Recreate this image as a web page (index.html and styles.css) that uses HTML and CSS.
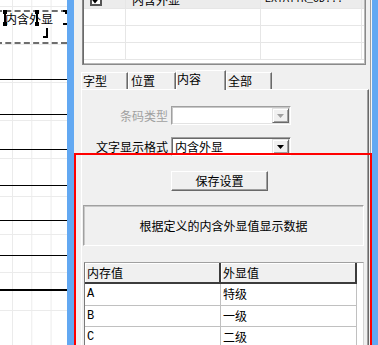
FILE: index.html
```html
<!DOCTYPE html>
<html lang="zh-CN">
<head>
    <meta charset="UTF-8">
    <meta name="viewport" content="width=device-width, initial-scale=1.0">
    <link rel="stylesheet" href="styles.css">
    <title>内含外显</title>
</head>
<body>
    <div class="screen">
        <!-- Report design canvas -->
        <div class="canvas">
            <div class="field">
                <span class="field-text">内含外显</span>
                <svg class="marks" width="71" height="34" viewBox="0 0 71 34">
                    <rect x="7" y="0" width="4" height="4"/>
                    <rect x="8" y="0" width="2" height="16"/>
                    <rect x="7" y="12" width="4" height="4"/>
                    <rect x="39" y="0" width="4" height="4"/>
                    <rect x="40" y="0" width="2" height="16"/>
                    <rect x="39" y="12" width="4" height="4"/>
                    <rect x="67" y="0" width="4" height="2"/>
                    <rect x="69" y="0" width="2" height="4"/>
                    <rect x="67" y="13" width="4" height="2"/>
                    <rect x="50" y="18" width="2" height="10"/>
                    <rect x="47" y="26" width="5" height="2"/>
                </svg>
            </div>
            <div class="band first"></div>
            <div class="band"></div>
            <div class="band"></div>
            <div class="band"></div>
            <div class="band"></div>
            <div class="band"></div>
            <div class="band last"></div>
        </div>

        <div class="edge edge-left"></div>

        <!-- Property dialog -->
        <div class="dialog">
            <div class="list">
                <div class="list-row on">
                    <div class="cell c1">
                        <svg class="check" width="12" height="12" viewBox="0 0 12 12">
                            <rect x="1" y="1" width="10" height="10" fill="#fff" stroke="#555" stroke-width="2"/>
                            <path d="M3 5.5 L5 8 L9 3" fill="none" stroke="#000" stroke-width="2"/>
                        </svg>
                    </div>
                    <div class="cell c2">内含外显</div>
                    <div class="cell c3 mono">EXTATTR_OD...</div>
                </div>
                <div class="list-row"><div class="cell c1"></div><div class="cell c2"></div><div class="cell c3"></div></div>
                <div class="list-row"><div class="cell c1"></div><div class="cell c2"></div><div class="cell c3"></div></div>
                <div class="list-row"><div class="cell c1"></div><div class="cell c2"></div><div class="cell c3"></div></div>
            </div>

            <div class="tabs">
                <div class="tab t1">字型</div>
                <div class="tab t2">位置</div>
                <div class="tab t3 active">内容</div>
                <div class="tab t4">全部</div>
            </div>

            <div class="pane">
                <div class="form-row first">
                    <label class="label disabled">条码类型</label>
                    <div class="combo disabled">
                        <span class="combo-value"></span>
                        <span class="combo-btn">
                            <svg width="7" height="4" viewBox="0 0 7 4"><polygon points="0,0 7,0 3.5,4" fill="#a0a0a0"/></svg>
                        </span>
                    </div>
                </div>
                <div class="form-row">
                    <label class="label">文字显示格式</label>
                    <div class="combo">
                        <span class="combo-value">内含外显</span>
                        <span class="combo-btn">
                            <svg width="7" height="4" viewBox="0 0 7 4"><polygon points="0,0 7,0 3.5,4" fill="#000"/></svg>
                        </span>
                    </div>
                </div>

                <button class="save">保存设置</button>

                <div class="note">根据定义的内含外显值显示数据</div>

                <div class="grid">
                    <div class="grid-row head">
                        <div class="gc g1">内存值</div>
                        <div class="gc g2">外显值</div>
                    </div>
                    <div class="grid-row">
                        <div class="gc g1 mono">A</div>
                        <div class="gc g2">特级</div>
                    </div>
                    <div class="grid-row">
                        <div class="gc g1 mono">B</div>
                        <div class="gc g2">一级</div>
                    </div>
                    <div class="grid-row">
                        <div class="gc g1 mono">C</div>
                        <div class="gc g2">二级</div>
                    </div>
                </div>
            </div>
        </div>

        <div class="edge edge-right"></div>

        <!-- Red highlight frame drawn over the dialog -->
        <div class="highlight"></div>
    </div>
</body>
</html>
```

FILE: styles.css
```css
/* Whole screen */
body, html {
    margin: 0;
    background-color: #fff;
    font-family: "Noto Sans CJK SC", "Liberation Sans", sans-serif;
    font-size: 12px;
    color: #000;
}

.screen {
    position: relative;
    display: flex;
    width: 378px;
    height: 345px;
    overflow: hidden;
}

/* Design canvas on the left */
.canvas {
    flex: none;
    width: 67px;
    background-color: #fff;
    background-image:
        linear-gradient(to right, #ebebeb 1px, transparent 1px),
        linear-gradient(to bottom, #ebebeb 1px, transparent 1px);
    background-size: 19.3px 100%, 100% 38px;
    background-position: 12px 0, 0 6px;
}

.field {
    position: relative;
    box-sizing: border-box;
    width: 71px;
    height: 34px;
    margin: 10px 0 0 -4px;
    border-top: 2px dashed #6e6e6e;
    border-bottom: 2px dashed #6e6e6e;
}

.field-text {
    display: block;
    padding-left: 9px;
    line-height: 14px;
}

.marks {
    position: absolute;
    top: -2px;
    left: 0;
    fill: #000;
}

.band {
    box-sizing: border-box;
    height: 35.2px;
    border-bottom: 1px solid #000;
}

.band.first {
    height: 36px;
}

.band.last {
    border-bottom-width: 2px;
}

/* Blue window edges */
.edge {
    flex: none;
    background-color: #62a8f2;
}

.edge-left {
    width: 7px;
}

.edge-right {
    width: 6px;
}

/* Dialog */
.dialog {
    flex: none;
    width: 298px;
    background-color: #f0f0f0;
    box-shadow: inset -1px 0 #f5f5f5, inset -2px 0 #a0a0a0;
}

.list {
    box-sizing: border-box;
    width: 284px;
    height: 75px;
    margin: -10px 0 0 8px;
    background-color: #fff;
    border: 1px solid #8a8a8a;
    box-shadow: inset 1px 1px #6a6a6a, inset -1px -1px #b8b8b8;
    padding: 1px;
    overflow: hidden;
}

.list-row {
    display: flex;
    box-sizing: border-box;
    height: 17px;
    border-bottom: 1px solid #e6e6e6;
}

.list-row.on {
    background-color: #ececec;
}

.cell {
    box-sizing: border-box;
    border-right: 1px solid #e6e6e6;
    line-height: 16px;
    white-space: nowrap;
    overflow: hidden;
}

.c1 { width: 42px; }
.c2 { width: 135px; padding-left: 6px; }
.c3 { width: 101px; padding-left: 4px; font-size: 10px; }

.check {
    display: block;
    margin: 2px 0 0 6px;
}

.mono {
    font-family: "Liberation Mono", monospace;
}

/* Tabs */
.tabs {
    display: flex;
    align-items: flex-end;
    height: 19px;
    margin: 5px 0 0 7px;
}

.tab {
    box-sizing: border-box;
    height: 17px;
    padding-left: 1px;
    line-height: 15px;
    border-top: 1px solid #fff;
    border-left: 1px solid #fff;
    border-right: 1px solid #696969;
    box-shadow: inset -1px 0 #a0a0a0;
    background-color: #f0f0f0;
}

.t1 { width: 47px; }
.t2 { width: 48px; padding-left: 2px; }
.t3 { width: 50px; }
.t4 { width: 46px; }

.tab.active {
    position: relative;
    z-index: 1;
    height: 20px;
    margin-bottom: -1px;
    padding-left: 0;
    line-height: 16px;
}

.pane {
    box-sizing: border-box;
    width: 288px;
    height: 260px;
    margin-left: 7px;
    border-top: 1px solid #fff;
    border-left: 1px solid #fff;
    border-right: 1px solid #696969;
    box-shadow: inset -1px 0 #a0a0a0;
}

/* Form rows */
.form-row {
    display: flex;
    height: 19px;
    margin-top: 12px;
}

.form-row.first {
    margin-top: 16px;
}

.label {
    width: 86px;
    margin-right: 3px;
    text-align: right;
    line-height: 19px;
}

.label.disabled {
    color: #a0a0a0;
}

.combo {
    display: flex;
    box-sizing: border-box;
    width: 120px;
    height: 19px;
    background-color: #fff;
    border: 1px solid;
    border-color: #a0a0a0 #fff #fff #a0a0a0;
    box-shadow: inset 1px 1px #696969, inset -1px -1px #e3e3e3;
    padding: 1px;
}

.combo.disabled {
    box-shadow: inset 1px 1px #c8c8c8, inset -1px -1px #e3e3e3;
}

.combo-value {
    flex: 1;
    padding-left: 2px;
    line-height: 15px;
}

.combo-btn {
    display: flex;
    justify-content: center;
    align-items: center;
    box-sizing: border-box;
    width: 17px;
    height: 15px;
    background-color: #f0f0f0;
    border: 1px solid;
    border-color: #e3e3e3 #696969 #696969 #e3e3e3;
    box-shadow: inset 1px 1px #fff, inset -1px -1px #a0a0a0;
}

/* Save button */
.save {
    display: block;
    box-sizing: border-box;
    width: 97px;
    height: 20px;
    margin: 15px 0 0 89px;
    padding: 0;
    font-family: inherit;
    font-size: 12px;
    line-height: 18px;
    color: #000;
    background-color: #f0f0f0;
    border: 1px solid;
    border-color: #fff #696969 #696969 #fff;
    box-shadow: inset -1px -1px #a0a0a0;
}

/* Hint box */
.note {
    box-sizing: border-box;
    width: 281px;
    height: 41px;
    margin: 14px 0 0 1px;
    border: 1px solid;
    border-color: #a0a0a0 #fff #fff #a0a0a0;
    box-shadow: inset 1px 1px #c8c8c8;
    text-align: center;
    line-height: 39px;
}

/* Mapping grid */
.grid {
    box-sizing: border-box;
    width: 280px;
    height: 100px;
    margin: 16px 0 0 2px;
    background-color: #fff;
    border-top: 1px solid #a0a0a0;
    border-left: 1px solid #7a7a7a;
    border-right: 1px solid #d4d4d4;
}

.grid-row {
    display: flex;
    height: 21.5px;
}

.grid-row.head {
    height: 21px;
}

.gc {
    box-sizing: border-box;
    width: 136px;
    padding-left: 2px;
    line-height: 20px;
    border-right: 1px solid #c0c0c0;
    border-bottom: 1px solid #c0c0c0;
}

.head .gc {
    background-color: #f0f0f0;
    border-right: 2px solid #3c3c3c;
    border-bottom: 2px solid #3c3c3c;
    box-shadow: inset 1px 1px #fff;
    line-height: 19px;
}

/* Red frame over the lower dialog */
.highlight {
    position: absolute;
    left: 74px;
    top: 153px;
    box-sizing: border-box;
    width: 298px;
    height: 220px;
    border: 2px solid #ff0000;
    pointer-events: none;
}
```
